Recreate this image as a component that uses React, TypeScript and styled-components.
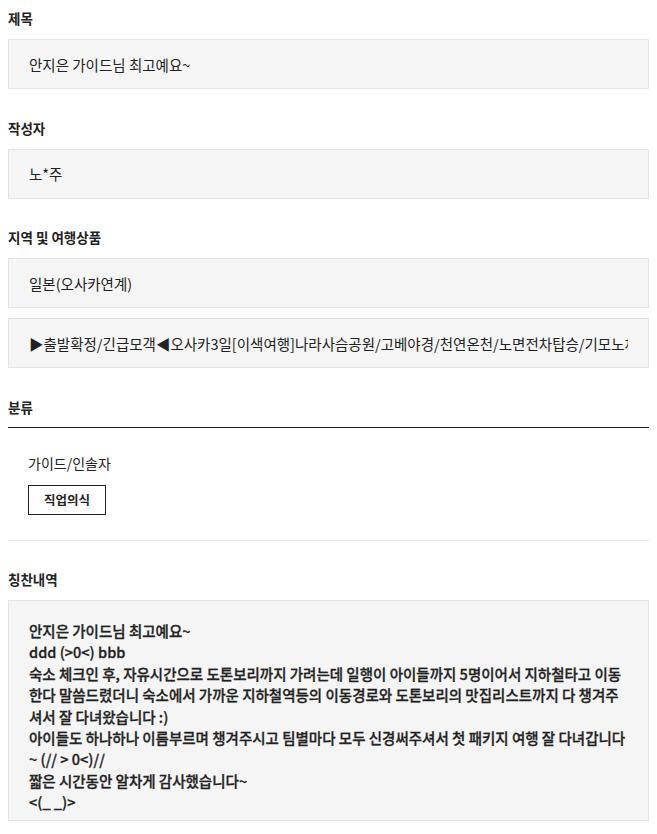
import { FC } from 'react';
import styled, { createGlobalStyle } from 'styled-components';

const GlobalStyle = createGlobalStyle`
  body {
    margin: 8px;
    background: #fff;
    color: #222;
    font-family: "Noto Sans CJK KR", "Noto Sans", sans-serif;
  }
`;

const comment = [
  '안지은 가이드님 최고예요~',
  'ddd (>0<) bbb',
  '숙소 체크인 후, 자유시간으로 도톤보리까지 가려는데 일행이 아이들까지 5명이어서 지하철타고 이동',
  '한다 말씀드렸더니 숙소에서 가까운 지하철역등의 이동경로와 도톤보리의 맛집리스트까지 다 챙겨주',
  '셔서 잘 다녀왔습니다 :)',
  '아이들도 하나하나 이름부르며 챙겨주시고 팀별마다 모두 신경써주셔서 첫 패키지 여행 잘 다녀갑니다',
  '~ (// > 0<)//',
  '짧은 시간동안 알차게 감사했습니다~',
  '<(_ _)>',
];

const App: FC = () => {
  return (
    <>
      <GlobalStyle />
      <Page>
        <Section>
          <Label>제목</Label>
          <Field>
            <FieldText>안지은 가이드님 최고예요~</FieldText>
          </Field>
        </Section>

        <Section>
          <Label>작성자</Label>
          <Field>
            <FieldText>노*주</FieldText>
          </Field>
        </Section>

        <Section>
          <Label>지역 및 여행상품</Label>
          <Field>
            <FieldText>일본(오사카연계)</FieldText>
          </Field>
          <Field>
            <FieldText>
              ▶출발확정/긴급모객◀오사카3일[이색여행]나라사슴공원/고베야경/천연온천/노면전차탑승/기모노체험
            </FieldText>
          </Field>
        </Section>

        <Section>
          <Label>분류</Label>
          <Category>
            <CategoryName>가이드/인솔자</CategoryName>
            <Tag>직업의식</Tag>
          </Category>
        </Section>

        <Section>
          <Label>칭찬내역</Label>
          <CommentBox>
            {comment.map((line, i) => (
              <CommentLine key={i}>{line}</CommentLine>
            ))}
          </CommentBox>
        </Section>
      </Page>
    </>
  );
};

const Page = styled.div`
  display: flex;
  flex-direction: column;
  gap: 28.5px;
`;

const Section = styled.section`
  display: flex;
  flex-direction: column;
  gap: 10px;
`;

const Label = styled.h3`
  margin: 0 0 1px;
  font-size: 13.5px;
  line-height: 20px;
  font-weight: 700;
  color: #222;
`;

const Field = styled.div`
  height: 48px;
  display: flex;
  align-items: center;
  padding: 0 20px;
  border: 1px solid #e3e3e3;
  background: #f5f5f5;
`;

const FieldText = styled.span`
  flex: 1;
  min-width: 0;
  overflow: hidden;
  white-space: nowrap;
  font-size: 14.5px;
  color: #222;
`;

const Category = styled.div`
  margin-top: -1px;
  border-top: 1px solid #222;
  border-bottom: 1px solid #e5e5e5;
  padding: 25px 20px;
  display: flex;
  flex-direction: column;
  align-items: flex-start;
  gap: 12px;
`;

const CategoryName = styled.div`
  font-size: 14px;
  line-height: 20px;
  color: #222;
`;

const Tag = styled.span`
  box-sizing: border-box;
  height: 30px;
  padding: 0 15px;
  display: inline-flex;
  align-items: center;
  border: 1px solid #222;
  font-size: 12.5px;
  font-weight: 700;
  color: #222;
`;

const CommentBox = styled.div`
  padding: 19px 20px 7px;
  border: 1px solid #e3e3e3;
  background: #f5f5f5;
`;

const CommentLine = styled.div`
  font-size: 14.5px;
  line-height: 21.4px;
  font-weight: 500;
  -webkit-text-stroke: 0.3px currentColor;
  white-space: pre;
  color: #222;
`;

export default App;
